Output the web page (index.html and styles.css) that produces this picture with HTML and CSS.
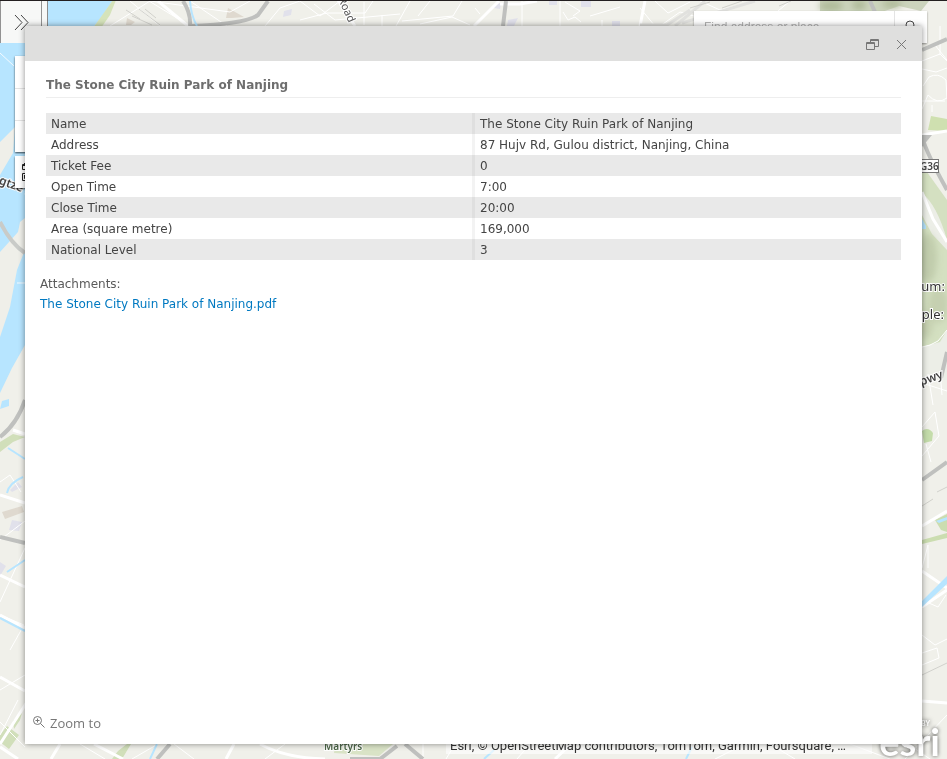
FILE: index.html
```html
<!DOCTYPE html>
<html lang="en">
<head>
<meta charset="utf-8">
<title>The Stone City Ruin Park of Nanjing</title>
<link rel="stylesheet" href="styles.css">
</head>
<body>
<main class="viewer">
  <svg class="map" viewBox="0 0 947 759" preserveAspectRatio="xMidYMid slice" aria-hidden="true">
    <defs>
      <filter id="soft" x="-20%" y="-20%" width="140%" height="140%"><feGaussianBlur stdDeviation="3"/></filter>
    </defs>
    <rect width="947" height="759" fill="#f0f0ea"/>
    <!-- river -->
    <path d="M0 0H113L105 12 93 28H40V60H25V345L12 368 0 393Z" fill="#b7e5ff"/>
    <path d="M15 127L0 142V175L13 153ZM25 218L20 222 18 232 0 252V337L10 307 17 270 25 250Z" fill="#efefe9"/>
    <path d="M113 0L93 28H101L110 15 116 0Z" fill="#d5e3ba"/>
    <path d="M0 53L14 66M17 283H25" stroke="#f4faff" fill="none" stroke-width="1"/>
    <path d="M0 222Q11 244 25 253" stroke="#c9cbc8" stroke-width="4" fill="none"/>
    <path d="M2 401L9 399V406L0 409Z" fill="#b7e5ff"/>
    <!-- parks -->
    <path d="M0 442L13 434 25 437 13 442 0 452ZM0 735L7 726 19 735 9 749 0 742ZM13 721L22 713 20 720 14 729ZM118 751L127 744H131L122 759H112Z" fill="#d1dfba"/>
    <path d="M335 744H393L379 756 334 753Z" fill="#d9e3c6"/>
    <path d="M928 130L931 116 947 119V131Z" fill="#cfe0b0"/>
    <path d="M922 165L947 200V380H922Z" fill="#d4e0c1"/>
    <path d="M922 193Q937 205 947 240V250L932 234 922 215ZM922 347L940 342 947 330V380H922Z" fill="#eceee7"/>
    <path d="M922 431Q928 426 933 433L932 441 924 443Z" fill="#c4dcaa"/>
    <path d="M935 520L947 514V532L941 530ZM922 540L947 533V538L922 544Z" fill="#cbddb0"/>
    <path d="M820 1H929L921 11 899 6 882 12H820Z" fill="#ccd4bd"/>
    <g filter="url(#soft)" fill="#aeba98">
      <ellipse cx="831" cy="6" rx="12" ry="5"/><ellipse cx="892" cy="4" rx="10" ry="4"/><ellipse cx="859" cy="5" rx="7" ry="5"/>
      <ellipse cx="928" cy="258" rx="9" ry="25" opacity=".5"/><ellipse cx="938" cy="305" rx="10" ry="18" opacity=".4"/><ellipse cx="925" cy="325" rx="8" ry="14" opacity=".4"/>
    </g>
    <!-- building blocks -->
    <path d="M228 8L244 17 232 18H226ZM127 18L135 22 131 25H126ZM2 512L22 506 24 512 5 519Z" fill="#dfd9cf"/>
    <path d="M284 11L292 9 291 15 283 17ZM495 4L501 3 500 9 494 8ZM508 20L518 18 514 26H507ZM549 1H557V5H549ZM581 1H591V7H581ZM612 21H620V26H612ZM10 490L18 482 22 487 12 492ZM12 520L22 522 19 531 9 530ZM0 562L6 566 0 576Z" fill="#e1e1eb"/>
    <!-- streets -->
    <g stroke="#fff" fill="none" stroke-width="1">
      <path d="M149 1L190 26M130 1L160 26M110 26L150 1 230 12 250 1M190 1L227 26M265 26L280 8 300 1 320 16 340 1M300 20L327 13 365 13 373 1M314 4L335 20 400 14M364 2V25M382 15V26M396 26L410 1M402 21L453 16 462 1M418 16L430 1M420 24L452 17 470 25M475 8L480 14M522 1V26M560 1V26M563 12L568 20 575 17 581 22M565 2L580 11 573 16M590 16L620 7M602 20V26"/>
      <path d="M640 8L655 26M655 1L668 13 690 2M660 26L680 12 694 16M700 1L720 10 755 1M778 11L790 1"/>
      <path d="M0 482L10 475 21 492M0 540L25 521M0 602L25 548M5 578L25 587M0 615L24 625 10 650M0 690L25 675M0 722L25 747M18 700L0 735"/>
      <path d="M922 61L940 54 947 61M923 86L929 77Q938 72 946 80L947 98Q937 105 928 95L922 109M922 101H945M935 45L947 60M940 26V55M922 69L936 72 947 68M932 105V112"/>
      <path d="M922 347L930 345 938 341 947 330M922 427L935 412 939 436 922 456M926 444L931 462M922 568L928 545V568M922 600L938 607 946 595M922 635L935 645 947 639M922 653L937 648 939 658 922 665M922 383L947 391M928 374L933 405M940 371L942 395"/>
      <path d="M80 744L105 759M158 744L132 759M174 744L194 759M265 759L285 744M423 744V759M446 759L455 744M517 759L530 744M715 759L745 744M770 744L795 759M850 744L890 759M895 735L930 759M905 759L947 715"/>
    </g>
    <g stroke="#fff" fill="none" stroke-width="3">
      <path d="M158 1L188 26M338 0L355 26M474 26L490 10 499 1M500 4H520L537 1M640 26L645 1M13 430L25 434M0 495L25 503M0 575L25 587M0 615L25 628M0 677L25 691M0 744L27 702M0 747L18 759M922 135L947 131M922 192L933 219 947 242M922 571L947 588M922 701L947 703M60 744L51 759M94 744L123 759M234 744L226 759M260 744Q285 758 325 759M555 759L571 744M922 607L947 590M922 526L947 511"/>
    </g>
    <path d="M640 25H667L690 10M675 26L705 1M682 23L755 1" stroke="#e1e1de" stroke-width="3" fill="none"/>
    <path d="M132 16L152 25M139 9L160 25M145 9L156 18M126 10L140 19M690 8L710 2M722 8L742 1M779 6L791 1M922 506L933 499M937 492L947 487M922 675L947 663" stroke="#d1d1cc" stroke-width="1" fill="none"/>
    <!-- highways -->
    <g stroke="#bfc0be" fill="none" stroke-width="4">
      <path d="M183 1Q191 13 190 26M190 26Q245 24 258 15L268 1M506 1L503 26M870 1L875 12M0 437Q17 424 25 400M0 537L25 543M922 480L947 462M922 137Q927 154 947 190M922 50L947 39M157 759L170 744M405 744L423 759M397 746L380 759 350 759M941 378L947 352"/>
    </g>
    <path d="M922 135H932L922 147Z" fill="#bfc0be"/>
    <path d="M190 1Q191 16 197 26M8 448L25 459M7 493Q9 483 23 477M7 572L25 560M0 618L25 631M150 759L157 744M484 759L494 750M686 759L692 747" stroke="#b7e5ff" stroke-width="2" fill="none"/>
    <path d="M922 601L947 576V584L922 607ZM922 219L926 226V229H922ZM936 521L947 517V520L939 523Z" fill="#b7e5ff"/>
    <g class="map-labels">
      <text transform="translate(338 -1) rotate(66)">Road</text>
      <text class="strong" transform="translate(-9 181) rotate(20)">ngtze R</text>
      <text class="strong" transform="translate(915 388) rotate(-20)">xpwy</text>
      <text class="place" x="324" y="750">Martyrs</text>
      <text class="legend" x="945" y="291" text-anchor="end">Museum:</text>
      <text class="legend" x="944" y="319" text-anchor="end">Temple:</text>
    </g>
    <rect x="900.5" y="159.500" width="38" height="13" fill="#fff" stroke="#777"/>
    <text class="shield" x="920" y="170">G36</text>
  </svg>

  <div class="side-panel"><button class="expand" type="button" aria-label="Expand panel">
    <svg width="16" height="18" viewBox="0 0 16 18"><path d="M1 2L8 9.500 1 17M7 2L14 9.500 7 17"/></svg>
  </button></div>
  <div class="side-edge"></div>
  <div class="tools">
    <div class="tool-group">
      <button type="button" aria-label="Zoom in"></button>
      <button type="button" aria-label="Home"></button>
      <button type="button" aria-label="Zoom out"></button>
    </div>
    <button class="basemap" type="button" aria-label="Basemaps">
      <svg width="18" height="20" viewBox="0 0 18 20"><path d="M1.500 7.500V2.500H8.500V7.500ZM1 3.500H9M3.500 1V3M1.500 11.500H8.500V18.500H1.500ZM3.500 13V16.500H6M11.500 2.500H17V7.500H11.500ZM11.500 11.500H17V18.500H11.500Z"/></svg>
    </button>
  </div>
  <form class="search">
    <input type="text" aria-label="Find address or place" placeholder="Find address or place">
    <button type="button" aria-label="Search"><svg width="14" height="16" viewBox="0 0 14 16"><circle cx="7" cy="5" r="4"/><path d="M4 8L1 12"/></svg></button>
  </form>
  <div class="attribution">Esri, © OpenStreetMap contributors, TomTom, Garmin, Foursquare, …</div>
  <div class="brand"><span class="powered">POWERED BY</span><span class="name">esri</span></div>

  <section class="popup" aria-labelledby="popup-title">
    <header class="popup-bar">
      <button type="button" aria-label="Restore"><svg width="13" height="12" viewBox="0 0 13 12"><path d="M.5 3.500H8.500V10.500H.5ZM.5 4.500H8.500M4.500 3V.5H12.500V7.500H9M4.500 1.500H12.500"/></svg></button>
      <button type="button" aria-label="Close"><svg width="11" height="11" viewBox="0 0 11 11"><path d="M1 1L10 10M10 1L1 10"/></svg></button>
    </header>
    <div class="popup-body">
      <h1 id="popup-title">The Stone City Ruin Park of Nanjing</h1>
      <table>
        <tbody>
          <tr><th scope="row">Name</th><td>The Stone City Ruin Park of Nanjing</td></tr>
          <tr><th scope="row">Address</th><td>87 Hujv Rd, Gulou district, Nanjing, China</td></tr>
          <tr><th scope="row">Ticket Fee</th><td>0</td></tr>
          <tr><th scope="row">Open Time</th><td>7:00</td></tr>
          <tr><th scope="row">Close Time</th><td>20:00</td></tr>
          <tr><th scope="row">Area (square metre)</th><td>169,000</td></tr>
          <tr><th scope="row">National Level</th><td>3</td></tr>
        </tbody>
      </table>
    </div>
    <div class="attachments">
      <div>Attachments:</div>
      <a href="#attachment">The Stone City Ruin Park of Nanjing.pdf</a>
    </div>
    <footer class="popup-actions">
      <a href="#zoom"><svg width="12" height="12" viewBox="0 0 12 12"><circle cx="4.500" cy="4.500" r="4"/><path d="M7.500 7.500L11.500 11.500M2.500 4.500H6.500M4.500 2.500V6.500"/></svg>Zoom to</a>
    </footer>
  </section>
</main>
</body>
</html>
```
FILE: styles.css
```css
* { box-sizing: border-box; }
body { margin: 0; font-family: "DejaVu Sans", Verdana, sans-serif; font-size: 12px; color: #444; }
button { margin: 0; padding: 0; border: 0; background: none; font: inherit; }
svg { display: block; fill: none; }

.viewer { position: relative; height: 100vh; overflow: hidden; border-top: 1px solid #231f20; }
.map { position: absolute; top: -1px; left: 0; width: 100%; height: 100vh; }
.map-labels text { font: 11px "Noto Sans", sans-serif; fill: #555; stroke: #fff; stroke-width: 2px; paint-order: stroke; }
.map-labels .strong { font-size: 12px; font-weight: 600; fill: #444; }
.map-labels .place { font-size: 10px; font-weight: 600; fill: #4d6748; }
.map-labels .legend { font: 13px "Noto Sans", sans-serif; fill: #333; }
.shield { font: 600 10px "Noto Sans", sans-serif; fill: #444; }

.side-panel { position: absolute; top: 0; left: 0; width: 42px; height: 42px; padding: 12px 0 0 13px; background: #f7f8f7; border: solid #929292; border-width: 0 1px; }
.expand svg { stroke: #444; }
.side-edge { position: absolute; top: 0; left: 42px; width: 6px; height: 25px; background: #f7f8f7; border-right: 1px solid #8c8c8c; }

.tools { position: absolute; top: 55px; left: 15px; width: 32px; display: grid; gap: 4px; }
.tool-group, .basemap { background: #fff; box-shadow: 0 1px 2px rgba(0, 0, 0, .7); }
.tool-group button { display: block; width: 100%; height: 32px; }
.tool-group button + button { border-top: 1px solid #e4e4e4; }
.basemap { height: 32px; padding: 6px; }
.basemap svg { stroke: #222; }

.search { position: absolute; top: 10px; right: 20px; width: 233px; height: 32px; display: flex; background: #fff; box-shadow: 0 1px 2px rgba(0, 0, 0, .4); }
.search input { flex: 1; min-width: 0; padding: 0 10px; border: 0; background: none; font: 12px "Liberation Sans", sans-serif; }
.search input::placeholder { color: #b4b4b4; opacity: 1; }
.search button { width: 33px; padding: 9px 8px; border-left: 1px solid #e4e4e4; }
.search svg { stroke: #444; }

.attribution { position: absolute; bottom: 5px; left: 446px; right: 75px; padding: 0 4px; overflow: hidden; white-space: nowrap; font: 13px/16px Roboto, sans-serif; color: #323232; background: rgba(255, 255, 255, .6); }
.brand { position: absolute; right: 7px; bottom: 3px; display: grid; justify-items: end; color: #fff; font-family: Lato, sans-serif; font-weight: bold; filter: drop-shadow(0 0 2px rgba(0, 0, 0, .65)); }
.powered { padding-right: 10px; font-size: 7px; line-height: 6px; }
.name { font-size: 38px; line-height: 30px; }

.popup { position: absolute; inset: 25px 25px 15px; display: flex; flex-direction: column; background: #fff; box-shadow: 0 0 6px rgba(0, 0, 0, .45); }
.popup-bar { height: 35px; padding: 2px 15px 0; display: flex; align-items: center; justify-content: flex-end; gap: 17px; background: #dfdfde; }
.popup-bar svg { stroke: #777; }
.popup-body { padding: 16px 21px; }
h1 { margin: 0 0 15px; height: 21px; border-bottom: 1px solid #eee; font-size: 12px; line-height: 16px; color: #6e6e6e; }
table { width: 100%; table-layout: fixed; border-collapse: collapse; line-height: 15px; }
tr:nth-child(odd) { background: #e9e9e9; }
th, td { height: 21px; padding: 4px 5px 2px; text-align: left; font-weight: normal; }
th { border-right: 3px solid #dfdfdf; }
tr:nth-child(even) th { border-right-color: #f3f3f3; }
.attachments { padding: 0 15px; line-height: 20px; color: #5a5a5a; margin-top: -2px; }
.attachments a { color: #0079c1; text-decoration: none; }
.popup-actions { margin-top: auto; padding: 0 8px 11px; font: 13px/20px "Open Sans", sans-serif; }
.popup-actions a { display: inline-flex; gap: 5px; color: #777; text-decoration: none; }
.popup-actions svg { stroke: #777; margin-top: 3px; }
```
